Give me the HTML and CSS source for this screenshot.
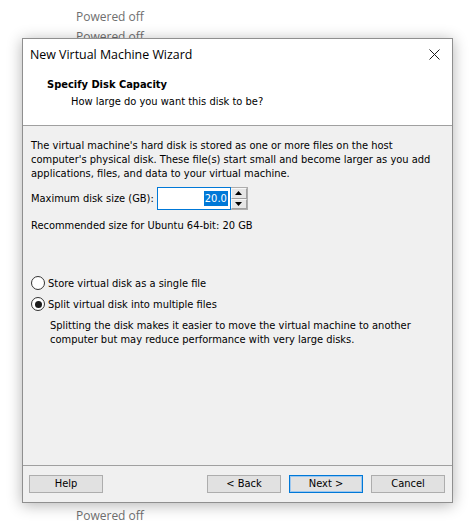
FILE: index.html
```html
<!DOCTYPE html>
<html>
<head>
<meta charset="utf-8">
<title>New Virtual Machine Wizard</title>
<link rel="stylesheet" href="styles.css">
</head>
<body>
<div class="desktop">
  <div class="vm-list">
    <div class="vm-status">Powered off</div>
    <div class="vm-status">Powered off</div>
  </div>
  <div class="vm-list bottom">
    <div class="vm-status">Powered off</div>
  </div>

  <div class="dialog">
    <div class="titlebar">
      <span class="title">New Virtual Machine Wizard</span>
      <span class="close">
        <svg width="11" height="11" viewBox="0 0 11 11"><path d="M0.5 0.5 L10.5 10.5 M10.5 0.5 L0.5 10.5" stroke="#1a1a1a" stroke-width="1" fill="none"/></svg>
      </span>
    </div>
    <div class="header">
      <div class="h-title">Specify Disk Capacity</div>
      <div class="h-sub">How large do you want this disk to be?</div>
    </div>
    <div class="content">
      <p class="para">The virtual machine's hard disk is stored as one or more files on the host computer's physical disk. These file(s) start small and become larger as you add applications, files, and data to your virtual machine.</p>
      <div class="size-row">
        <span class="label">Maximum disk size (GB):</span>
        <div class="spin">
          <div class="spin-input"><span class="sel">20.0</span></div>
          <div class="spin-btns">
            <span class="spin-btn"><svg width="7" height="4" viewBox="0 0 7 4"><path d="M3.5 0 L7 4 L0 4 Z" fill="#000"/></svg></span>
            <span class="spin-btn"><svg width="7" height="4" viewBox="0 0 7 4"><path d="M0 0 L7 0 L3.5 4 Z" fill="#000"/></svg></span>
          </div>
        </div>
      </div>
      <p class="rec">Recommended size for Ubuntu 64-bit: 20 GB</p>
      <div class="radios">
        <div class="radio-row"><span class="radio"></span><span>Store virtual disk as a single file</span></div>
        <div class="radio-row second"><span class="radio checked"></span><span>Split virtual disk into multiple files</span></div>
        <p class="desc">Splitting the disk makes it easier to move the virtual machine to another computer but may reduce performance with very large disks.</p>
      </div>
    </div>
    <div class="footer">
      <span class="btn">Help</span>
      <span class="spacer"></span>
      <span class="btn">&lt; Back</span>
      <span class="btn default">Next &gt;</span>
      <span class="btn">Cancel</span>
    </div>
  </div>
</div>
</body>
</html>
```
FILE: styles.css
```css
html, body {
  margin: 0;
  padding: 0;
  background: #ffffff;
}

.desktop {
  position: relative;
  height: 527px;
  display: flex;
  flex-direction: column;
  justify-content: space-between;
  overflow: hidden;
}

.vm-list {
  padding: 7px 0 0 76px;
}

.vm-list.bottom {
  padding: 0 0 2px 76px;
}

.vm-status {
  font-family: "Open Sans", "Noto Sans", sans-serif;
  font-size: 12px;
  line-height: 20px;
  color: #6f6f6f;
}

.vm-list.bottom .vm-status {
  line-height: 19px;
}

.dialog {
  position: absolute;
  top: 38px;
  left: 22px;
  width: 431px;
  height: 465px;
  box-sizing: border-box;
  border: 1px solid #8f8f8f;
  background: #f0f0f0;
  box-shadow: 0 2px 14px rgba(0, 0, 0, 0.3);
  display: flex;
  flex-direction: column;
  font-family: "DejaVu Sans Condensed", "DejaVu Sans", sans-serif;
  font-size: 11px;
  color: #000;
}

.titlebar {
  height: 32px;
  background: #fff;
  display: flex;
  align-items: center;
  justify-content: space-between;
  padding: 0 12px 0 7px;
}

.title {
  font-family: "Open Sans", "Noto Sans", sans-serif;
  font-size: 12.4px;
  color: #000;
  line-height: 32px;
}

.close {
  display: flex;
  width: 11px;
  height: 11px;
  margin-top: -1px;
}

.header {
  height: 55px;
  box-sizing: border-box;
  background: #fff;
  border-bottom: 1px solid #a0a0a0;
  padding: 7px 0 0 24px;
}

.h-title {
  font-weight: bold;
  line-height: 14px;
}

.h-sub {
  line-height: 14px;
  margin-top: 3px;
  padding-left: 24px;
}

.content {
  flex: 1;
  padding: 13px 8px 0 8px;
}

.para {
  margin: 0;
  line-height: 14px;
}

.size-row {
  display: flex;
  align-items: center;
  margin-top: 6px;
  height: 23px;
}

.label {
  line-height: 14px;
  margin-right: 3px;
}

.spin {
  display: flex;
  height: 23px;
}

.spin-input {
  width: 74px;
  box-sizing: border-box;
  border: 1px solid #0078d7;
  background: #fff;
  display: flex;
  align-items: center;
  justify-content: flex-end;
  padding-right: 2px;
}

.sel {
  background: #0078d7;
  color: #fff;
  line-height: 15px;
  padding: 0 1px;
}

.spin-btns {
  width: 17px;
  display: flex;
  flex-direction: column;
  border: 1px solid #adadad;
  border-left: none;
  box-sizing: border-box;
  background: #f0f0f0;
}

.spin-btn {
  flex: 1;
  display: flex;
  align-items: center;
  justify-content: center;
  background: #e6e6e6;
  border: 1px solid #f8f8f8;
  border-right-color: #a0a0a0;
  border-bottom-color: #a0a0a0;
}

.rec {
  margin: 9px 0 0 0;
  line-height: 14px;
}

.radios {
  margin-top: 42px;
}

.radio-row {
  display: flex;
  align-items: center;
  height: 16px;
  gap: 3px;
}

.radio-row.second {
  margin-top: 5px;
}

.radio {
  width: 14px;
  height: 14px;
  box-sizing: border-box;
  border: 1px solid #333;
  border-radius: 50%;
  background: #fff;
  position: relative;
}

.radio.checked::after {
  content: "";
  position: absolute;
  left: 2.5px;
  top: 2.5px;
  width: 7px;
  height: 7px;
  border-radius: 50%;
  background: #1a1a1a;
}

.desc {
  margin: 7px 0 0 19px;
  line-height: 14px;
}

.footer {
  height: 37px;
  box-sizing: border-box;
  border-top: 1px solid #a0a0a0;
  display: flex;
  align-items: flex-start;
  padding: 9px 7px 0 6px;
  gap: 8px;
}

.spacer {
  flex: 1;
}

.btn {
  width: 74px;
  height: 18px;
  box-sizing: border-box;
  border: 1px solid #adadad;
  background: #e1e1e1;
  display: flex;
  align-items: center;
  justify-content: center;
  line-height: 14px;
}

.btn.default {
  border-color: #0078d7;
  box-shadow: inset 0 0 0 1px #9cc7ef;
}
```
